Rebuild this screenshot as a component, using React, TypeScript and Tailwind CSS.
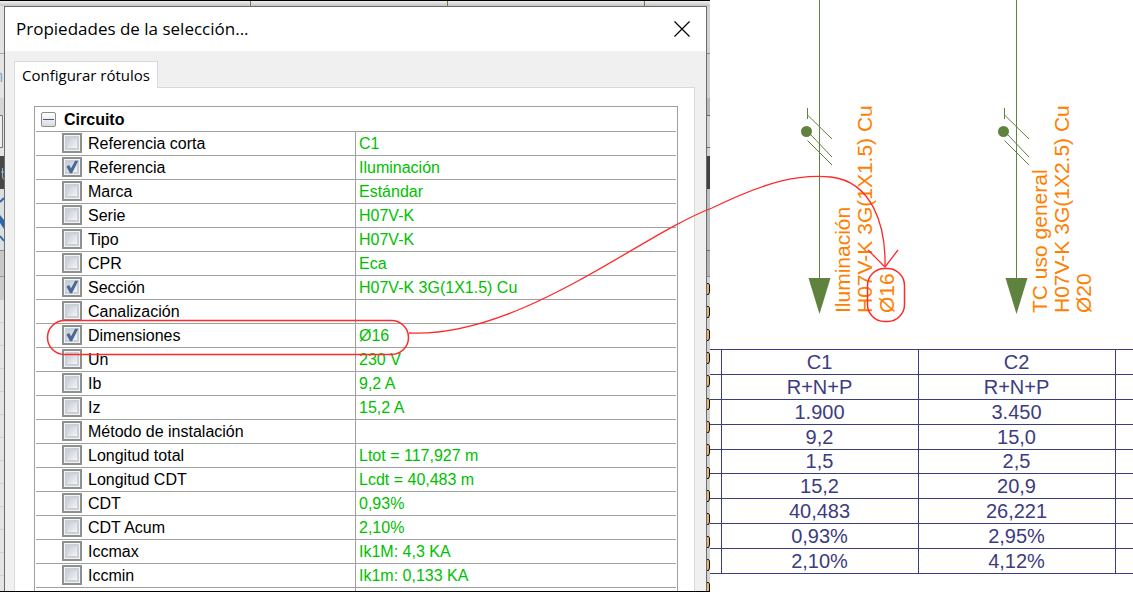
import { useState } from "react";

type PropertyRow = {
  id: string;
  label: string;
  value: string;
  visible: boolean;
};

const PROPERTIES: PropertyRow[] = [
  { id: "referencia-corta", label: "Referencia corta", value: "C1", visible: false },
  { id: "referencia", label: "Referencia", value: "Iluminación", visible: true },
  { id: "marca", label: "Marca", value: "Estándar", visible: false },
  { id: "serie", label: "Serie", value: "H07V-K", visible: false },
  { id: "tipo", label: "Tipo", value: "H07V-K", visible: false },
  { id: "cpr", label: "CPR", value: "Eca", visible: false },
  { id: "seccion", label: "Sección", value: "H07V-K 3G(1X1.5) Cu", visible: true },
  { id: "canalizacion", label: "Canalización", value: "", visible: false },
  { id: "dimensiones", label: "Dimensiones", value: "Ø16", visible: true },
  { id: "un", label: "Un", value: "230 V", visible: false },
  { id: "ib", label: "Ib", value: "9,2 A", visible: false },
  { id: "iz", label: "Iz", value: "15,2 A", visible: false },
  { id: "metodo", label: "Método de instalación", value: "", visible: false },
  { id: "longitud-total", label: "Longitud total", value: "Ltot = 117,927 m", visible: false },
  { id: "longitud-cdt", label: "Longitud CDT", value: "Lcdt = 40,483 m", visible: false },
  { id: "cdt", label: "CDT", value: "0,93%", visible: false },
  { id: "cdt-acum", label: "CDT Acum", value: "2,10%", visible: false },
  { id: "iccmax", label: "Iccmax", value: "Ik1M: 4,3 KA", visible: false },
  { id: "iccmin", label: "Iccmin", value: "Ik1m: 0,133 KA", visible: false },
];

const FEEDERS = [
  { id: "c1", lines: ["Iluminación", "H07V-K 3G(1X1.5) Cu", "Ø16"] },
  { id: "c2", lines: ["TC uso general", "H07V-K 3G(1X2.5) Cu", "Ø20"] },
];

const RESULTS = [
  ["C1", "C2"],
  ["R+N+P", "R+N+P"],
  ["1.900", "3.450"],
  ["9,2", "15,0"],
  ["1,5", "2,5"],
  ["15,2", "20,9"],
  ["40,483", "26,221"],
  ["0,93%", "2,95%"],
  ["2,10%", "4,12%"],
];

function CheckBox({ id, checked, onChange }: { id: string; checked: boolean; onChange: () => void }) {
  return (
    <span className="relative mt-px block size-5 shrink-0 border-2 border-[#8e8f8f] bg-[#f4f4f4] p-px">
      <input
        id={id}
        type="checkbox"
        checked={checked}
        onChange={onChange}
        className="block size-[14px] appearance-none border-2 border-[#c9d0da] bg-linear-to-br from-[#c5cbd5] to-[#f6f6f6]"
      />
      {checked && (
        <svg viewBox="0 0 16 16" className="pointer-events-none absolute inset-0 size-4" aria-hidden="true">
          <path d="M2.500 7.500 L5.200 6 L7 9.200 L11.200 1.800 L14.200 1.800 L8 14.200 L6 14.200 Z" fill="#4a6797" />
        </svg>
      )}
    </span>
  );
}

// Propiedades del circuito con su casilla de visibilidad.
function PropertyGrid() {
  const [rows, setRows] = useState(PROPERTIES);
  const [open, setOpen] = useState(true);

  const toggle = (id: string) =>
    setRows(rows.map((row) => (row.id === id ? { ...row, visible: !row.visible } : row)));

  return (
    <div className="flex flex-1 flex-col border border-b-0 border-[#a0a0a0] px-px font-['Liberation_Sans',Arial,sans-serif] text-base leading-[23px]">
      <div className="flex h-[25px] items-center border-b border-[#a0a0a0] pl-[5px]">
        <button
          type="button"
          aria-label="Circuito"
          aria-expanded={open}
          onClick={() => setOpen(!open)}
          className="flex size-[15px] items-center justify-center rounded-xs border border-[#8e8e8e] bg-linear-to-b from-white to-[#dcdcdc]"
        >
          <span className="h-px w-[11px] bg-[#3b5aa0]" />
        </button>
        <h2 className="ml-2 font-bold text-black">Circuito</h2>
      </div>
      {open && (
        <table className="w-full table-fixed border-separate border-spacing-0">
          <tbody>
            {rows.map((row) => (
              <tr key={row.id} className="h-6">
                <td className="w-1/2 border-r border-b border-[#a0a0a0] p-0">
                  <div className="flex h-[23px] items-start pl-[26px]">
                    <CheckBox id={row.id} checked={row.visible} onChange={() => toggle(row.id)} />
                    <label htmlFor={row.id} className="ml-1.5 text-black">
                      {row.label}
                    </label>
                  </div>
                </td>
                <td className="border-b border-[#a0a0a0] p-0 pl-[3px] text-[#00c000]">{row.value}</td>
              </tr>
            ))}
          </tbody>
        </table>
      )}
      <div className="grid min-h-[3px] flex-1 grid-cols-2">
        <span className="border-r border-[#a0a0a0]" />
      </div>
    </div>
  );
}

function Dialog() {
  return (
    <section className="flex flex-1 flex-col border border-b-0 border-[#6c6c6c] bg-[#f0f0f0] font-['Open_Sans',sans-serif] text-black">
      <header className="flex h-11 items-center justify-between bg-white pr-4 pl-[11px]">
        <h1 className="text-[17px] leading-6">Propiedades de la selección...</h1>
        <button type="button" aria-label="Cerrar" className="size-4">
          <svg viewBox="0 0 16 16" className="size-4" fill="none" stroke="#000" strokeWidth="1.2">
            <path d="M0.5 0.5 L15.5 15.5 M15.5 0.5 L0.5 15.5" />
          </svg>
        </button>
      </header>
      <div className="flex flex-1 flex-col pt-[10px] pr-[11px] pl-[9px]">
        <div role="tablist" className="flex">
          <button
            type="button"
            role="tab"
            aria-selected="true"
            className="z-10 -mb-px h-[27px] border border-b-0 border-[#d9d9d9] bg-white px-[7px] text-[15px] leading-6"
          >
            Configurar rótulos
          </button>
        </div>
        <div className="flex flex-1 flex-col border border-b-0 border-[#d9d9d9] bg-white pt-[18px] pr-4 pl-[19px]">
          <PropertyGrid />
        </div>
      </div>
    </section>
  );
}

// Restos de la ventana principal que asoman a la izquierda del diálogo.
function LeftEdge() {
  return (
    <svg width="4" height="585" viewBox="0 6 4 585" className="shrink-0 bg-[#e4e4e4]" aria-hidden="true">
      <rect y="6" width="4" height="47" fill="#e3e3e3" />
      <rect y="53" width="4" height="1" fill="#a8a8a8" />
      <path d="M0 73.500 Q1.500 73 1.500 76 V82" fill="none" stroke="#8aa7c4" strokeWidth="1.500" />
      <rect y="98" width="4" height="17" fill="#d5d5d5" />
      <path d="M0 115.500 H2.500 V147.500 H0" fill="#eeeeee" stroke="#777" />
      <rect y="156" width="4" height="33" fill="#474747" />
      <path d="M2.500 168 V177 Q2.500 179 4 179 M1 172 H4" fill="none" stroke="#9fb6d8" />
      <rect y="189" width="4" height="61" fill="#dcdfe2" />
      <path d="M0 202 L4 198 M0 236 L4 241" stroke="#2f67a5" strokeWidth="2" />
      <path d="M0 215 L4 220 V229 L0 223 Z" fill="#2f67a5" />
      <rect y="250" width="4" height="1" fill="#8a8a8a" />
      <rect y="251" width="4" height="25" fill="#c8c8c8" />
      <rect y="276" width="4" height="1" fill="#999" />
      <rect y="277" width="4" height="23" fill="#cdcdcd" />
      <path d="M0 322.500 H4 M0 345.500 H4 M0 368.500 H4 M0 391.500 H4 M0 414.500 H4 M0 437.500 H4 M0 460.500 H4 M0 483.500 H4 M0 506.500 H4 M0 529.500 H4 M0 552.500 H4 M0 575.500 H4" stroke="#cfcfcf" />
    </svg>
  );
}

const CELL_TOPS = [283, 306, 329, 352, 375, 398, 421, 444, 467, 490, 513, 536, 559, 582];

function RightEdge() {
  return (
    <svg width="3" height="585" viewBox="0 6 3 585" className="shrink-0 bg-[#d2d2d2]" aria-hidden="true">
      <rect y="53" width="3" height="1" fill="#8a8a8a" />
      <rect y="54" width="3" height="44" fill="#cfd1d1" />
      <rect y="98" width="3" height="17" fill="#b9b9b9" />
      <rect y="115" width="3" height="1" fill="#6e6e6e" />
      <rect y="147" width="3" height="1" fill="#6e6e6e" />
      <rect y="156" width="3" height="33" fill="#414141" />
      <rect y="189" width="3" height="61" fill="#bdbdbd" />
      <rect y="250" width="3" height="1" fill="#777" />
      <rect y="251" width="3" height="25" fill="#b4b4b4" />
      <rect y="276" width="3" height="1" fill="#888" />
      {CELL_TOPS.map((top) => (
        <g key={top}>
          <rect y={top + 1} width="2" height="10" fill="#e9b36c" />
          <path d={`M0 ${top + 0.5} H1.500 L2.500 ${top + 2} V${top + 9} L1.500 ${top + 11.5} H0`} fill="none" stroke="#111" />
        </g>
      ))}
    </svg>
  );
}

function FeederSymbol() {
  return (
    <svg width="25" height="314" viewBox="6 0 25 314" className="overflow-visible" aria-hidden="true">
      <g fill="none" stroke="#5f823f">
        <path d="M18.500 0 V280" />
        <path d="M6.500 108 V119 M6.500 115 L31 139 M10 135 L31 157 M6.500 140.500 L31 165" />
      </g>
      <circle cx="5.500" cy="131.500" r="5.500" fill="#5f823f" />
      <path d="M7.500 278 H29.500 L18.500 314 Z" fill="#5f823f" />
    </svg>
  );
}

function Schematic() {
  return (
    <main className="min-w-0 flex-1 bg-white font-['Liberation_Sans',Arial,sans-serif]">
      <div className="grid grid-cols-2 pr-[18px] pl-[11px]">
        {FEEDERS.map((feeder) => (
          <div key={feeder.id} className="grid h-[349px] grid-cols-[1fr_25px_1fr] items-start">
            <span />
            <FeederSymbol />
            <div className="flex h-[313px] rotate-180 justify-self-start text-[21px] leading-[22px] whitespace-nowrap text-[#ff8000] [writing-mode:vertical-rl]">
              <div>
                {feeder.lines.map((line) => (
                  <p key={line}>{line}</p>
                ))}
              </div>
            </div>
          </div>
        ))}
      </div>
      <table className="h-[225px] w-full table-fixed border-collapse text-center text-xl leading-[22px] text-[#3c3c80]">
        <colgroup>
          <col className="w-[11px]" />
          <col />
          <col />
          <col className="w-[18px]" />
        </colgroup>
        <tbody>
          {RESULTS.map(([first, second]) => (
            <tr key={first} className="border-y border-[#3c3c80]">
              <td className="border-r border-[#3c3c80] p-0" />
              <td className="border-r border-[#3c3c80] p-0">{first}</td>
              <td className="border-r border-[#3c3c80] p-0">{second}</td>
              <td className="p-0" />
            </tr>
          ))}
        </tbody>
      </table>
    </main>
  );
}

// Marcas rojas que unen la propiedad con su rótulo en el esquema.
function Callout() {
  return (
    <svg
      width="1133"
      height="592"
      className="pointer-events-none absolute top-0 left-0 z-20"
      fill="none"
      stroke="#ff2a2a"
      aria-hidden="true"
    >
      <rect x="47.500" y="320.500" width="361" height="34" rx="17" strokeWidth="1.500" />
      <path d="M409 333 C 520 338 640 235 712 208 C 770 180 800 174 831 177 C 872 182 886 225 885 267" strokeWidth="1.300" />
      <path d="M868 250 L885 267 L898 250" strokeWidth="1.300" />
      <rect x="867.500" y="268.500" width="37" height="53" rx="17" strokeWidth="1.500" />
    </svg>
  );
}

export default function App() {
  return (
    <div className="relative flex min-h-screen bg-white">
      <div className="flex w-[710px] shrink-0 flex-col border-y border-black">
        <div className="flex h-[5px] gap-[196px] bg-linear-to-b from-[#f0f0f0] to-[#c4c4c4] pl-[250px]">
          <span className="w-px bg-[#5f823f]" />
          <span className="w-px bg-[#5f823f]" />
          <span className="w-px bg-[#5f823f]" />
        </div>
        <div className="flex flex-1">
          <LeftEdge />
          <Dialog />
          <RightEdge />
        </div>
      </div>
      <Schematic />
      <Callout />
    </div>
  );
}
